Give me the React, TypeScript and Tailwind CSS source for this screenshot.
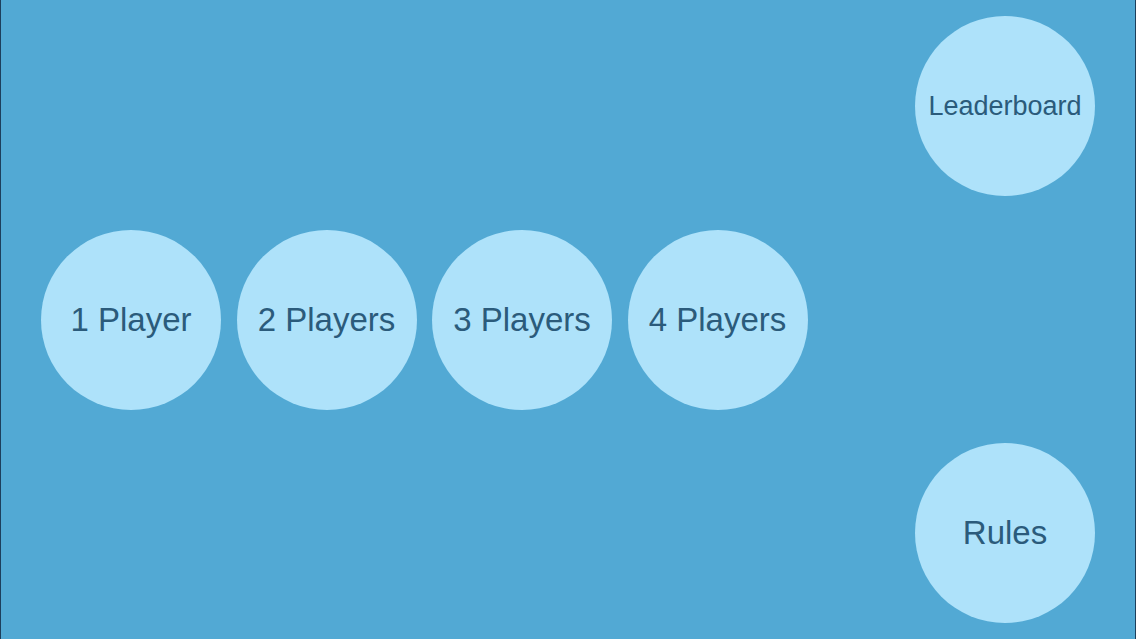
const players = ["1 Player", "2 Players", "3 Players", "4 Players"];

function Circle({ label, small }: { label: string; small?: boolean }) {
  return (
    <button
      className={`w-[180px] h-[180px] shrink-0 rounded-full bg-[#aee2fa] text-[#2b5b7b] flex items-center justify-center ${
        small ? "text-[27px]" : "text-[33px]"
      }`}
    >
      {label}
    </button>
  );
}

export default function App() {
  return (
    <div
      className="w-[1136px] h-[639px] bg-[#52a9d4] border-l border-r border-[#1d3f5c] flex items-center justify-between pl-[40px] pr-[40px]"
      style={{ fontFamily: '"Liberation Sans", Arial, sans-serif' }}
    >
      <div className="flex items-center gap-[15.5px]">
        {players.map((p) => (
          <Circle key={p} label={p} />
        ))}
      </div>
      <div className="h-full flex flex-col justify-between py-[16px]">
        <Circle label="Leaderboard" small />
        <Circle label="Rules" />
      </div>
    </div>
  );
}
